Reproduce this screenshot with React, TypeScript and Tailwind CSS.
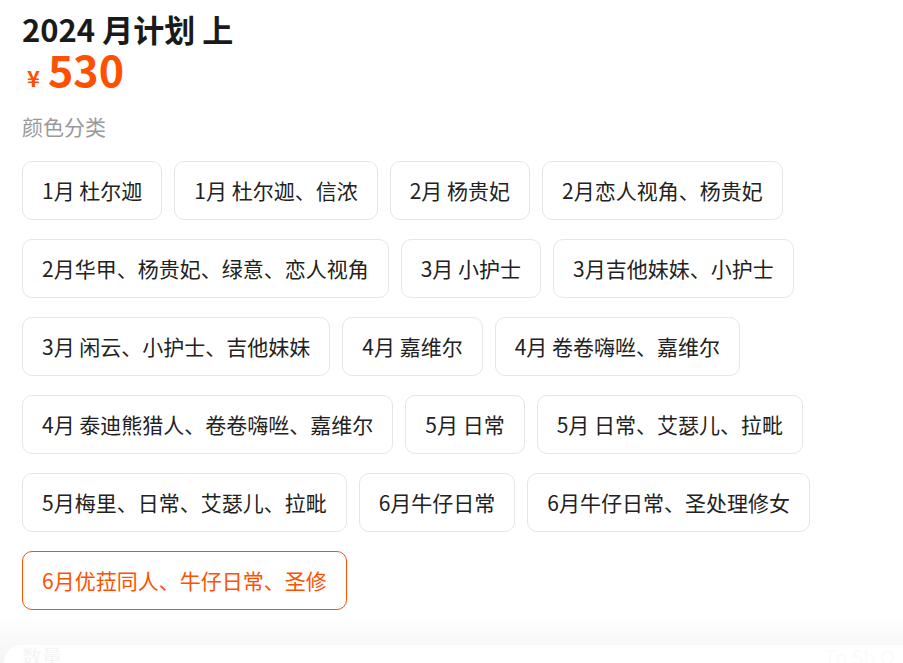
const options = [
    '1月 杜尔迦',
    '1月 杜尔迦、信浓',
    '2月 杨贵妃',
    '2月恋人视角、杨贵妃',
    '2月华甲、杨贵妃、绿意、恋人视角',
    '3月 小护士',
    '3月吉他妹妹、小护士',
    '3月 闲云、小护士、吉他妹妹',
    '4月 嘉维尔',
    '4月 卷卷嗨咝、嘉维尔',
    '4月 泰迪熊猎人、卷卷嗨咝、嘉维尔',
    '5月 日常',
    '5月 日常、艾瑟儿、拉毗',
    '5月梅里、日常、艾瑟儿、拉毗',
    '6月牛仔日常',
    '6月牛仔日常、圣处理修女',
    '6月优菈同人、牛仔日常、圣修',
]

const selected = '6月优菈同人、牛仔日常、圣修'

function OptionChip({ label, active }: { label: string; active: boolean }) {
    return (
        <div
            className={
                active
                    ? 'flex h-[59px] items-center rounded-[10px] border border-[#ff5000] px-[19px] text-[21px] text-[#ff5000]'
                    : 'flex h-[59px] items-center rounded-[10px] border border-[#e6e6e6] px-[19px] text-[21px] text-[#222222]'
            }
        >
            {label}
        </div>
    )
}

export default function App() {
    return (
        <div
            className="relative h-[663px] w-[903px] overflow-hidden bg-white"
            style={{ fontFamily: '"Noto Sans CJK SC", "Noto Sans", sans-serif' }}
        >
            <div className="px-[22px] pt-[12px]">
                <h1 className="text-[31px] font-bold leading-[34px] text-[#1a1a1a]">2024 月计划 上</h1>
                <div className="mt-[4px] flex h-[40px] items-end gap-[8px] font-bold leading-none text-[#ff5000]">
                    <span className="mb-[2px] pl-[5px] text-[22px]">¥</span>
                    <span className="text-[43px]">530</span>
                </div>
                <p className="mt-[21px] text-[21px] leading-[30px] text-[#999999]">颜色分类</p>
                <div className="mt-[20px] flex flex-wrap gap-x-[12px] gap-y-[19px]">
                    {options.map((o) => (
                        <OptionChip key={o} label={o} active={o === selected} />
                    ))}
                </div>
            </div>

            {/* faded bottom sheet */}
            <div className="absolute inset-x-0 bottom-0 h-[50px] bg-gradient-to-b from-white/0 to-[#f5f5f5]">
                <div className="absolute inset-x-0 bottom-0 ml-[4px] flex h-[18px] items-start justify-between overflow-hidden rounded-tl-[22px] bg-white px-[18px]">
                    <span className="text-[20px] leading-[24px] text-[#f5f5f5]">数量</span>
                    <span className="mr-[-10px] text-[20px] leading-[24px] text-[#fbfbfb]">Tn Sh   Q</span>
                </div>
            </div>
        </div>
    )
}
